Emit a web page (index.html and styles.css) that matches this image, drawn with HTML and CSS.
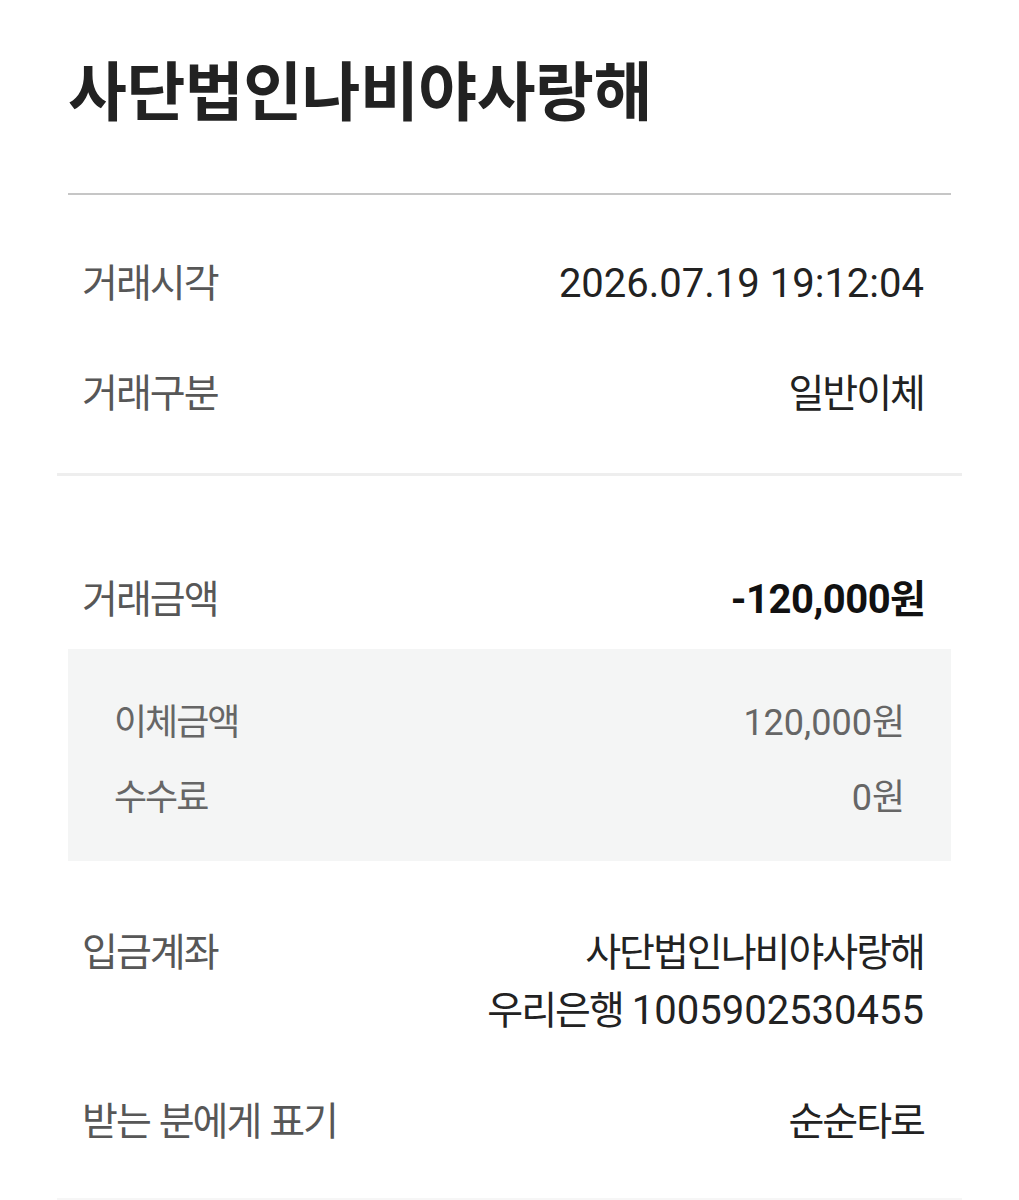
FILE: index.html
```html
<!DOCTYPE html>
<html lang="ko">
<head>
<meta charset="utf-8">
<title>거래내역 상세</title>
<link rel="stylesheet" href="styles.css">
</head>
<body>
<div class="page">
  <header class="header">
    <h1 class="title">사단법인나비야사랑해</h1>
  </header>

  <section class="group group-first">
    <div class="row">
      <span class="label">거래시각</span>
      <span class="value"><span class="num">2026.07.19 19:12:04</span></span>
    </div>
    <div class="row">
      <span class="label">거래구분</span>
      <span class="value">일반이체</span>
    </div>
  </section>

  <section class="group group-amount">
    <div class="row row-amount">
      <span class="label">거래금액</span>
      <span class="value strong"><span class="num">-120,000</span>원</span>
    </div>
    <div class="breakdown">
      <div class="sub-row">
        <span class="sub-label">이체금액</span>
        <span class="sub-value"><span class="num-sm">120,000</span>원</span>
      </div>
      <div class="sub-row">
        <span class="sub-label">수수료</span>
        <span class="sub-value"><span class="num-sm">0</span>원</span>
      </div>
    </div>

    <div class="row row-multi">
      <span class="label">입금계좌</span>
      <span class="value stack">
        <span class="line">사단법인나비야사랑해</span>
        <span class="line">우리은행 <span class="num">1005902530455</span></span>
      </span>
    </div>
    <div class="row row-multi row-last">
      <span class="label">받는 분에게 표기</span>
      <span class="value stack"><span class="line">순순타로</span></span>
    </div>
  </section>
</div>
</body>
</html>
```

FILE: styles.css
```css
* { box-sizing: border-box; }

html, body {
  margin: 0;
  padding: 0;
  background: #ffffff;
}

body {
  font-family: "Roboto", "Noto Sans CJK KR", sans-serif;
  color: #222222;
}

.page {
  width: 1019px;
  padding: 0 57px;
}

.header {
  margin: 0 11px;
  height: 195px;
  border-bottom: 2px solid #c6c6c6;
  padding-top: 51px;
}

.title {
  margin: 0;
  font-family: "Noto Sans CJK KR", sans-serif;
  font-weight: 700;
  font-size: 64px;
  line-height: 72px;
  letter-spacing: -0.5px;
  color: #222222;
}

.group-first {
  padding: 30px 0 28px;
  border-bottom: 3px solid #eeeeee;
}

.row {
  display: flex;
  justify-content: space-between;
  align-items: center;
  height: 110px;
  padding: 0 38px 0 25px;
}

.label {
  font-family: "Noto Sans CJK KR", sans-serif;
  font-size: 39px;
  letter-spacing: -2px;
  color: #575757;
}

.value {
  font-family: "Noto Sans CJK KR", sans-serif;
  font-size: 39px;
  letter-spacing: -2px;
  color: #222222;
  text-align: right;
}

.num {
  font-family: "Roboto", sans-serif;
  font-size: 40px;
  letter-spacing: 0;
}

.strong {
  font-weight: 700;
  color: #111111;
}

.group-amount {
  padding-top: 70px;
}

.row-amount {
  height: 100px;
  margin-bottom: 3px;
}

.row-amount .num {
  letter-spacing: -0.5px;
}

.breakdown {
  margin: 0 11px;
  background: #f4f5f5;
  padding: 32px 48px 30px 46px;
}

.sub-row {
  display: flex;
  justify-content: space-between;
  align-items: center;
  height: 75px;
}

.sub-label,
.sub-value {
  font-family: "Noto Sans CJK KR", sans-serif;
  font-size: 36px;
  letter-spacing: -2px;
  color: #666666;
}

.num-sm {
  font-family: "Roboto", sans-serif;
  font-size: 36px;
  letter-spacing: 0;
}

.row-multi {
  height: auto;
  align-items: flex-start;
  margin-top: 59px;
}

.row-multi .label {
  line-height: 58px;
}

.stack {
  display: flex;
  flex-direction: column;
  align-items: flex-end;
}

.line {
  line-height: 58px;
  white-space: nowrap;
}

.row-last {
  margin-top: 49px;
  padding-bottom: 51px;
  border-bottom: 2px solid #f6f6f6;
}
```
